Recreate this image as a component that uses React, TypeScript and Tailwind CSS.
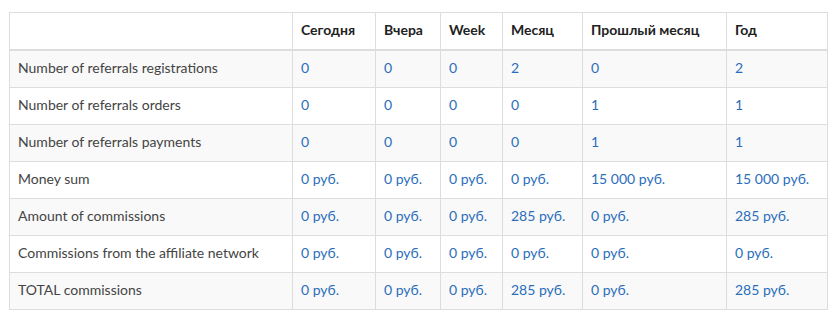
import React from "react";

const cols = ["Сегодня", "Вчера", "Week", "Месяц", "Прошлый месяц", "Год"];
const widths = ["w-[283px]", "w-[83px]", "w-[65px]", "w-[62px]", "w-[80px]", "w-[144px]", "w-[101px]"];

const rows: [string, string[]][] = [
  ["Number of referrals registrations", ["0", "0", "0", "2", "0", "2"]],
  ["Number of referrals orders", ["0", "0", "0", "0", "1", "1"]],
  ["Number of referrals payments", ["0", "0", "0", "0", "1", "1"]],
  ["Money sum", ["0 руб.", "0 руб.", "0 руб.", "0 руб.", "15 000 руб.", "15 000 руб."]],
  ["Amount of commissions", ["0 руб.", "0 руб.", "0 руб.", "285 руб.", "0 руб.", "285 руб."]],
  ["Commissions from the affiliate network", ["0 руб.", "0 руб.", "0 руб.", "0 руб.", "0 руб.", "0 руб."]],
  ["TOTAL commissions", ["0 руб.", "0 руб.", "0 руб.", "285 руб.", "0 руб.", "285 руб."]],
];

export default function App() {
  return (
    <div className="w-[838px] h-[327px] bg-white pt-[12px] pl-[9px] font-['Lato',sans-serif] text-[14px] leading-[20px] text-[#444]">
      <table className="table-fixed border-collapse w-[819px]">
        <colgroup>
          {widths.map((w, i) => (
            <col key={i} className={w} />
          ))}
        </colgroup>
        <thead>
          <tr>
            <th className="border border-[#ddd] border-b-2 px-2 pt-[7px] pb-[9px] text-left font-bold text-[#222]"></th>
            {cols.map((c) => (
              <th key={c} className="border border-[#ddd] border-b-2 px-2 pt-[7px] pb-[9px] text-left font-bold text-[#222]">
                {c}
              </th>
            ))}
          </tr>
        </thead>
        <tbody>
          {rows.map(([label, vals], i) => (
            <tr key={label} className={i % 2 === 0 ? "bg-[#f9f9f9]" : "bg-white"}>
              <td className="border border-[#ddd] px-2 pt-[7px] pb-[9px] whitespace-nowrap">{label}</td>
              {vals.map((v, j) => (
                <td key={j} className="border border-[#ddd] px-2 pt-[7px] pb-[9px] text-[#2a6ebb] whitespace-nowrap">
                  {v}
                </td>
              ))}
            </tr>
          ))}
        </tbody>
      </table>
    </div>
  );
}
